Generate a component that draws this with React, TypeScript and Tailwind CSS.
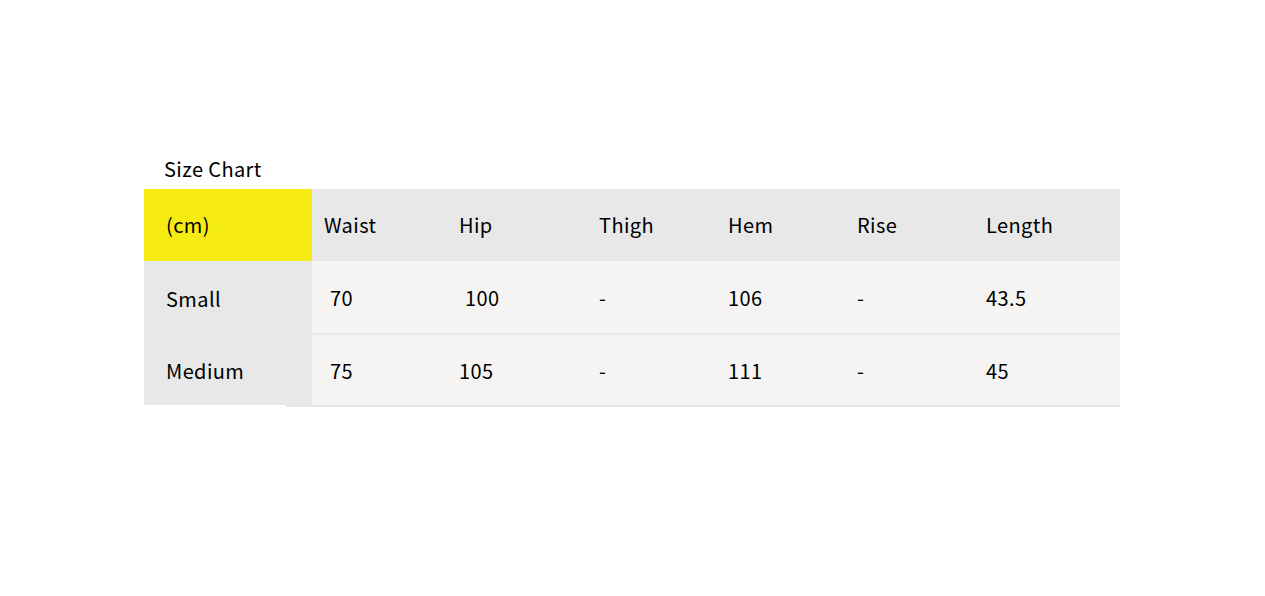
const columns = [
  { label: "Waist", w: "w-[135px]" },
  { label: "Hip", w: "w-[140px]" },
  { label: "Thigh", w: "w-[129px]" },
  { label: "Hem", w: "w-[129px]" },
  { label: "Rise", w: "w-[129px]" },
  { label: "Length", w: "w-[146px]" },
];

const rows = [
  { size: "Small", values: ["70", "100", "-", "106", "-", "43.5"], pad: ["pl-[18px]", "pl-[18px]"] },
  { size: "Medium", values: ["75", "105", "-", "111", "-", "45"], pad: ["pl-[18px]", "pl-[12px]"] },
];

export default function App() {
  return (
    <div
      className="min-h-[596px] bg-white pt-[156px] pl-[144px] text-black tracking-[0.4px]"
      style={{ fontFamily: '"Noto Sans CJK KR", "Noto Sans", sans-serif' }}
    >
      <h2 className="pl-[20px] text-[20px] leading-[26px] h-[33px]">Size Chart</h2>
      <div className="w-[976px]">
        <div className="flex h-[72px] items-center bg-[#e8e8e8] text-[20px]">
          <div className="flex h-full w-[168px] items-center bg-[#f6ec14] pl-[22px]">(cm)</div>
          {columns.map((c) => (
            <div key={c.label} className={`${c.w} pl-[12px]`}>
              {c.label}
            </div>
          ))}
        </div>
        {rows.map((r, i) => (
          <div key={r.size} className={`flex text-[20px] ${i === 0 ? "h-[74px]" : "h-[70px]"}`}>
            <div className="flex h-full w-[168px] items-center bg-[#e8e8e8] pl-[22px] pt-[2px]">{r.size}</div>
            <div
              className={`flex flex-1 items-center bg-[#f5f4f2] pt-[2px] ${
                i === 0 ? "border-b-2 border-[#e8e8e8]" : ""
              }`}
            >
              {r.values.map((v, j) => (
                <div key={j} className={`${columns[j].w} ${j < 2 ? r.pad[j] : "pl-[12px]"}`}>
                  {v}
                </div>
              ))}
            </div>
          </div>
        ))}
        <div className="ml-[142px] h-[2px] bg-[#e8e8e8]" />
      </div>
    </div>
  );
}
